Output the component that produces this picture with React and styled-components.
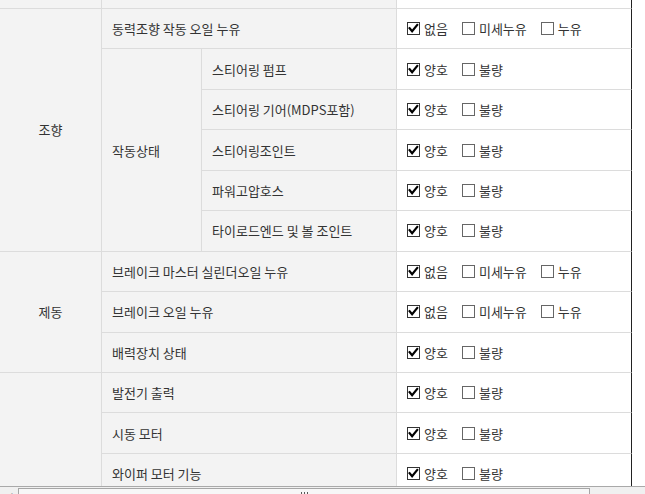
import React from "react";
import styled, { createGlobalStyle } from "styled-components";

const Global = createGlobalStyle`
  html, body { margin: 0; padding: 0; height: 100%; overflow: hidden; background: #fff; }
  body { font-family: "Noto Sans CJK KR", "Noto Sans", sans-serif; color: #333; }
`;

const Frame = styled.div`
  display: flex;
  flex-direction: column;
  width: 645px;
  height: 503px;
`;

const Viewport = styled.div`
  height: 486px;
  flex-shrink: 0;
  overflow: hidden;
  background: #fff;
`;

const Table = styled.div`
  display: grid;
  width: 632px;
  grid-template-columns: 102px 100px 195px 235px;
  grid-template-rows: 9px;
  grid-auto-rows: 40.45px;
  font-size: 13px;
  line-height: 1;
`;

const BaseCell = styled.div`
  box-sizing: border-box;
  border-right: 1px solid #dcdcdc;
  border-bottom: 1px solid #dcdcdc;
  display: flex;
  align-items: center;
  min-width: 0;
  white-space: nowrap;
  overflow: hidden;
`;

const GroupCell = styled(BaseCell)`
  grid-column: 1;
  grid-row: span ${(p) => p.$span || 1};
  justify-content: center;
  background: #f3f3f3;
`;

const SubGroupCell = styled(BaseCell)`
  grid-column: 2;
  grid-row: span ${(p) => p.$span || 1};
  padding-left: 10px;
  background: #f3f3f3;
`;

const ItemCell = styled(BaseCell)`
  grid-column: ${(p) => (p.$wide ? "2 / span 2" : "3")};
  padding-left: 10px;
  background: #f3f3f3;
`;

const ValueCell = styled(BaseCell)`
  grid-column: 4;
  padding-left: 10px;
  gap: 14px;
  background: #fff;
  border-right: 1px solid #222;
`;

const Option = styled.label`
  display: inline-flex;
  align-items: center;
  gap: 4px;
  color: #333;
`;

const Box = styled.svg`
  display: block;
  flex-shrink: 0;
`;

const Check = ({ checked }) => (
  <Box width="13" height="13" viewBox="0 0 13 13">
    <rect x="0.5" y="0.5" width="12" height="12" fill="#fff" stroke={checked ? "#333" : "#666"} />
    {checked && (
      <path d="M2.6 6.2 L5.1 9.2 L10.2 3" fill="none" stroke="#000" strokeWidth="2.2" strokeLinecap="square" />
    )}
  </Box>
);

const Options = ({ kind }) => {
  const list = kind === "leak" ? ["없음", "미세누유", "누유"] : ["양호", "불량"];
  return list.map((t, i) => (
    <Option key={t}>
      <Check checked={i === 0} />
      <span>{t}</span>
    </Option>
  ));
};

const Scrollbar = styled.div`
  height: 17px;
  flex-shrink: 0;
  box-sizing: border-box;
  border-top: 1px solid #a9a9a9;
  background: #f0f0f0;
  display: flex;
  align-items: flex-start;
`;

const Arrow = styled.div`
  width: 18px;
  height: 16px;
  display: flex;
  justify-content: center;
  padding-top: 4px;
  box-sizing: border-box;
  font-size: 9px;
  color: #606060;
  font-family: "DejaVu Sans", sans-serif;
`;

const Thumb = styled.div`
  margin-top: 1px;
  width: 572px;
  height: 15px;
  box-sizing: border-box;
  border: 1px solid #a6a6a6;
  background: #f7f7f7;
  display: flex;
  justify-content: center;
  padding-top: 3px;
`;

const Grip = styled.div`
  width: 7px;
  height: 7px;
  background: repeating-linear-gradient(90deg, #5a5a5a 0 1px, transparent 1px 3px);
`;

const leakRows = new Set(["동력조향 작동 오일 누유", "브레이크 마스터 실린더오일 누유", "브레이크 오일 누유"]);
const kindOf = (t) => (leakRows.has(t) ? "leak" : "ok");

export default function App() {
  const steeringSub = ["스티어링 펌프", "스티어링 기어(MDPS포함)", "스티어링조인트", "파워고압호스", "타이로드엔드 및 볼 조인트"];
  const brake = ["브레이크 마스터 실린더오일 누유", "브레이크 오일 누유", "배력장치 상태"];
  const electric = ["발전기 출력", "시동 모터", "와이퍼 모터 기능"];

  return (
    <Frame>
      <Global />
      <Viewport>
        <Table>
          <GroupCell />
          <ItemCell $wide />
          <ValueCell />

          <GroupCell $span={6}>조향</GroupCell>
          <ItemCell $wide>동력조향 작동 오일 누유</ItemCell>
          <ValueCell><Options kind="leak" /></ValueCell>
          <SubGroupCell $span={5}>작동상태</SubGroupCell>
          {steeringSub.map((t) => (
            <React.Fragment key={t}>
              <ItemCell>{t}</ItemCell>
              <ValueCell><Options kind="ok" /></ValueCell>
            </React.Fragment>
          ))}

          <GroupCell $span={3}>제동</GroupCell>
          {brake.map((t) => (
            <React.Fragment key={t}>
              <ItemCell $wide>{t}</ItemCell>
              <ValueCell><Options kind={kindOf(t)} /></ValueCell>
            </React.Fragment>
          ))}

          <GroupCell $span={3} />
          {electric.map((t) => (
            <React.Fragment key={t}>
              <ItemCell $wide>{t}</ItemCell>
              <ValueCell><Options kind="ok" /></ValueCell>
            </React.Fragment>
          ))}
        </Table>
      </Viewport>
      <Scrollbar>
        <Arrow>◀</Arrow>
        <Thumb><Grip /></Thumb>
      </Scrollbar>
    </Frame>
  );
}
